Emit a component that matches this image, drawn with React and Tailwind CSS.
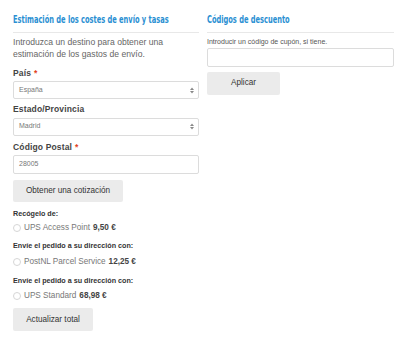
import React from "react";

const body = { fontFamily: '"Liberation Sans", Arial, sans-serif' };
const head = { fontFamily: '"DejaVu Sans Condensed", "DejaVu Sans", sans-serif' };

function Select({ value }) {
  return (
    <div className="flex h-[18px] items-center justify-between rounded-[2px] border border-[#dcdcdc] bg-white pl-[5px] pr-[4px]">
      <span className="text-[7px] text-[#777]">{value}</span>
      <svg width="4" height="7" viewBox="0 0 4 7">
        <path d="M0 3 L2 0.5 L4 3 Z" fill="#888" />
        <path d="M0 4 L2 6.5 L4 4 Z" fill="#888" />
      </svg>
    </div>
  );
}

function Label({ children, req }) {
  return (
    <div className="text-[8.5px] font-bold tracking-[0.15px] text-[#444] leading-none">
      {children}
      {req && <span className="ml-[3px] text-[#e2401c]">*</span>}
    </div>
  );
}

function Radio({ name, price }) {
  return (
    <div className="flex items-center gap-[3px] text-[8.2px] leading-none">
      <span className="h-[8px] w-[8px] rounded-full border border-[#d6d6d6] bg-white" />
      <span className="text-[#777]">{name}</span>
      <span className="font-bold text-[#444]">{price}</span>
    </div>
  );
}

function Heading({ children }) {
  return (
    <h2 className="whitespace-nowrap text-[10.5px] font-semibold leading-none text-[#2a8fd2]" style={head}>
      <span className="inline-block origin-left scale-x-[0.705]">{children}</span>
    </h2>
  );
}

export default function App() {
  return (
    <div className="h-[343px] w-[400px] bg-white" style={body}>
      <div className="flex gap-[8px] pl-[13px] pr-[6px] pt-[14px]">
        <div className="flex w-[186px] flex-col">
          <Heading>Estimación de los costes de envío y tasas</Heading>
          <div className="mt-[7px] h-px bg-[#e8e8e8]" />
          <p className="mt-[3px] text-[8.6px] leading-[12px] text-[#666]">
            Introduzca un destino para obtener una estimación de los gastos de envío.
          </p>
          <div className="mt-[9px]"><Label req>País</Label></div>
          <div className="mt-[4px]"><Select value="España" /></div>
          <div className="mt-[6px]"><Label>Estado/Provincia</Label></div>
          <div className="mt-[4px]"><Select value="Madrid" /></div>
          <div className="mt-[7px]"><Label req>Código Postal</Label></div>
          <div className="mt-[4px] flex h-[19px] items-center rounded-[2px] border border-[#dcdcdc] bg-white pl-[5px]">
            <span className="text-[7px] text-[#777]">28005</span>
          </div>
          <button className="mt-[6px] flex h-[22px] w-[110px] items-center justify-center rounded-[2px] bg-[#ebebeb] text-[8.2px] text-[#333]">
            Obtener una cotización
          </button>
          <div className="mt-[8px] text-[7.2px] font-bold leading-none text-[#333]">Recógelo de:</div>
          <div className="mt-[7px]"><Radio name="UPS Access Point" price="9,50 €" /></div>
          <div className="mt-[10px] text-[7.2px] font-bold leading-none text-[#333]">Envíe el pedido a su dirección con:</div>
          <div className="mt-[8px]"><Radio name="PostNL Parcel Service" price="12,25 €" /></div>
          <div className="mt-[11px] text-[7.2px] font-bold leading-none text-[#333]">Envíe el pedido a su dirección con:</div>
          <div className="mt-[8px]"><Radio name="UPS Standard" price="68,98 €" /></div>
          <button className="mt-[8px] flex h-[23px] w-[80px] items-center justify-center rounded-[2px] bg-[#ebebeb] text-[8.2px] text-[#333]">
            Actualizar total
          </button>
        </div>
        <div className="flex w-[187px] flex-col">
          <Heading>Códigos de descuento</Heading>
          <div className="mt-[7px] h-px bg-[#e8e8e8]" />
          <p className="mt-[5px] text-[7px] leading-none text-[#555]">
            Introducir un código de cupón, si tiene.
          </p>
          <div className="mt-[3px] h-[19px] rounded-[2px] border border-[#dcdcdc] bg-white" />
          <button className="mt-[5px] flex h-[23px] w-[73px] items-center justify-center rounded-[2px] bg-[#ebebeb] text-[8.2px] text-[#333]">
            Aplicar
          </button>
        </div>
      </div>
    </div>
  );
}
